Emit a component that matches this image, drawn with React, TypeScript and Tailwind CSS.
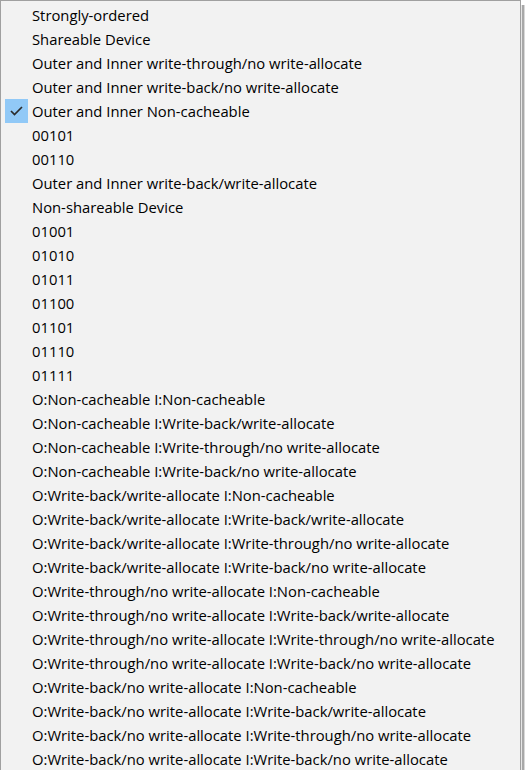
import React from 'react';

const items = [
  'Strongly-ordered',
  'Shareable Device',
  'Outer and Inner write-through/no write-allocate',
  'Outer and Inner write-back/no write-allocate',
  'Outer and Inner Non-cacheable',
  '00101',
  '00110',
  'Outer and Inner write-back/write-allocate',
  'Non-shareable Device',
  '01001',
  '01010',
  '01011',
  '01100',
  '01101',
  '01110',
  '01111',
  'O:Non-cacheable I:Non-cacheable',
  'O:Non-cacheable I:Write-back/write-allocate',
  'O:Non-cacheable I:Write-through/no write-allocate',
  'O:Non-cacheable I:Write-back/no write-allocate',
  'O:Write-back/write-allocate I:Non-cacheable',
  'O:Write-back/write-allocate I:Write-back/write-allocate',
  'O:Write-back/write-allocate I:Write-through/no write-allocate',
  'O:Write-back/write-allocate I:Write-back/no write-allocate',
  'O:Write-through/no write-allocate I:Non-cacheable',
  'O:Write-through/no write-allocate I:Write-back/write-allocate',
  'O:Write-through/no write-allocate I:Write-through/no write-allocate',
  'O:Write-through/no write-allocate I:Write-back/no write-allocate',
  'O:Write-back/no write-allocate I:Non-cacheable',
  'O:Write-back/no write-allocate I:Write-back/write-allocate',
  'O:Write-back/no write-allocate I:Write-through/no write-allocate',
  'O:Write-back/no write-allocate I:Write-back/no write-allocate',
];

const checked = 4;

export default function App() {
  return (
    <div className="w-[525px] h-[770px] overflow-hidden bg-white">
      <div className="flex h-full">
        <div className="w-[521px] h-[790px] bg-[#f2f2f2] border-l border-t border-r border-[#a0a0a0] pt-[2px] font-['Open_Sans',sans-serif] text-[14.8px] text-black">
          {items.map((label, i) => (
            <div key={i} className="flex items-center h-6">
              <div className="w-[31px] h-6 flex items-center">
                {i === checked && (
                  <div className="ml-[4px] w-[23px] h-6 bg-[#91c9f7] flex items-center justify-center">
                    <svg width="13" height="10" viewBox="0 0 13 10" fill="none">
                      <path d="M1 5 L4.5 8.5 L12 1" stroke="#2b2b2b" strokeWidth="1.7" />
                    </svg>
                  </div>
                )}
              </div>
              <span className="whitespace-nowrap leading-6">{label}</span>
            </div>
          ))}
        </div>
        <div className="w-[4px] pt-[5px] flex">
          <div className="w-px bg-[#e6e6e6]" />
          <div className="w-[2px] bg-[#a8a8a8]" />
          <div className="w-px bg-[#d8d8d8]" />
        </div>
      </div>
    </div>
  );
}
